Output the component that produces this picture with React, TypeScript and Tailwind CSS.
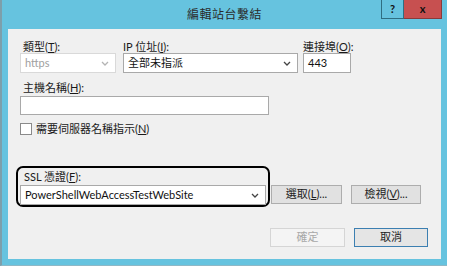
import { ReactNode } from "react";

const FONT = "font-['Lato','Noto_Sans_CJK_TC',sans-serif]";

const Chevron = ({ light }: { light?: boolean }) => (
  <svg width="8" height="5" viewBox="0 0 8 5" className="shrink-0">
    <path
      d="M1 1 L4 4 L7 1"
      fill="none"
      stroke={light ? "#b4b4b4" : "#444"}
      strokeWidth="1.3"
    />
  </svg>
);

const Label = ({ children, className = "" }: { children: ReactNode; className?: string }) => (
  <div className={`text-[11px] leading-[15px] text-[#1a1a1a] whitespace-nowrap ${className}`}>
    {children}
  </div>
);

const Select = ({
  value,
  width,
  disabled,
}: {
  value: string;
  width: string;
  disabled?: boolean;
}) => (
  <div
    className={`${width} h-[20px] flex items-center justify-between pl-[4px] pr-[6px] border bg-white text-[11px] ${
      disabled ? "border-[#d9d9d9] text-[#a0a0a0]" : "border-[#a9a9a9] text-[#111]"
    }`}
  >
    <span>{value}</span>
    <Chevron light={disabled} />
  </div>
);

const Button = ({
  children,
  width,
  variant = "normal",
}: {
  children: ReactNode;
  width: string;
  variant?: "normal" | "disabled" | "default";
}) => {
  const styles = {
    normal: "border-[#adadad] bg-[#e1e1e1] text-[#222]",
    disabled: "border-[#d5d5d5] bg-[#f4f4f4] text-[#a8a8a8]",
    default: "border-[#3c7fb1] bg-[#e5e5e5] text-[#222]",
  }[variant];
  return (
    <div
      className={`${width} h-[19px] border flex items-center justify-center text-[11px] whitespace-nowrap ${styles}`}
    >
      {children}
    </div>
  );
};

export default function App() {
  return (
    <div className={`w-[450px] h-[269px] bg-white ${FONT}`}>
      <div className="w-[447px] h-[266px] bg-[#66c3df] border-l-2 border-[#7d9fab] border-b border-b-[#8fb8c6] flex flex-col">
        {/* title bar */}
        <div className="relative h-[29px] shrink-0 flex items-center justify-center">
          <span className="text-[12px] text-[#2a2a2a] tracking-[0.5px]">編輯站台繫結</span>
          <div className="absolute top-0 right-[5px] flex">
            <div className="w-[23px] h-[19px] border border-[#2f6e82] border-t-0 flex items-center justify-center text-[11px] font-bold text-[#111]">
              ?
            </div>
            <div className="w-[38px] h-[19px] bg-[#c75050] border border-[#8a3a3a] border-t-0 border-l-0 flex items-center justify-center text-[11px] font-bold text-[#111]">
              x
            </div>
          </div>
        </div>

        {/* client area */}
        <div className="ml-[6px] mr-[6px] h-[230px] shrink-0 bg-[#f0f0f0] flex flex-col pl-[12px] pt-[10px] [&>*]:shrink-0">
          <div className="flex">
            <div className="w-[96px] flex flex-col">
              <Label className="pl-[3px]">
                類型(<u>T</u>):
              </Label>
              <div className="mt-[-1px]">
                <Select value="https" width="w-[96px]" disabled />
              </div>
            </div>
            <div className="ml-[7px] w-[175px] flex flex-col">
              <Label>
                IP 位址(<u>I</u>):
              </Label>
              <div className="mt-[-1px]">
                <Select value="全部未指派" width="w-[175px]" />
              </div>
            </div>
            <div className="ml-[5px] w-[48px] flex flex-col">
              <Label>
                連接埠(<u>O</u>):
              </Label>
              <div className="mt-[-1px] w-[48px] h-[20px] border border-[#a9a9a9] bg-white text-[11px] text-[#111] flex items-center pl-[4px]">
                443
              </div>
            </div>
          </div>

          <Label className="pl-[3px] mt-[7px]">
            主機名稱(<u>H</u>):
          </Label>
          <div className="mt-[1px] w-[249px] h-[19px] border border-[#a9a9a9] bg-white" />

          <div className="mt-[6px] flex items-center">
            <div className="w-[12px] h-[12px] border border-[#8a8a8a] bg-white" />
            <Label className="ml-[4px]">
              需要伺服器名稱指示(<u>N</u>)
            </Label>
          </div>

          <div className="mt-[30px] ml-[-4px] flex items-end">
            <div className="w-[254px] h-[41px] border-2 border-black rounded-[7px] flex flex-col pl-[2px] pt-[1px]">
              <Label className="pl-[4px]">
                SSL 憑證(<u>F</u>):
              </Label>
              <div className="mt-[1px]">
                <Select value="PowerShellWebAccessTestWebSite" width="w-[246px]" />
              </div>
            </div>
            <div className="ml-[1px] mb-[3px] flex gap-[9px]">
              <Button width="w-[71px]">
                選取(<u>L</u>)...
              </Button>
              <Button width="w-[70px]">
                檢視(<u>V</u>)...
              </Button>
            </div>
          </div>

          <div className="mt-[21px] ml-[250px] flex gap-[9px]">
            <Button width="w-[75px]" variant="disabled">
              確定
            </Button>
            <Button width="w-[74px]" variant="default">
              取消
            </Button>
          </div>
        </div>
      </div>
    </div>
  );
}
